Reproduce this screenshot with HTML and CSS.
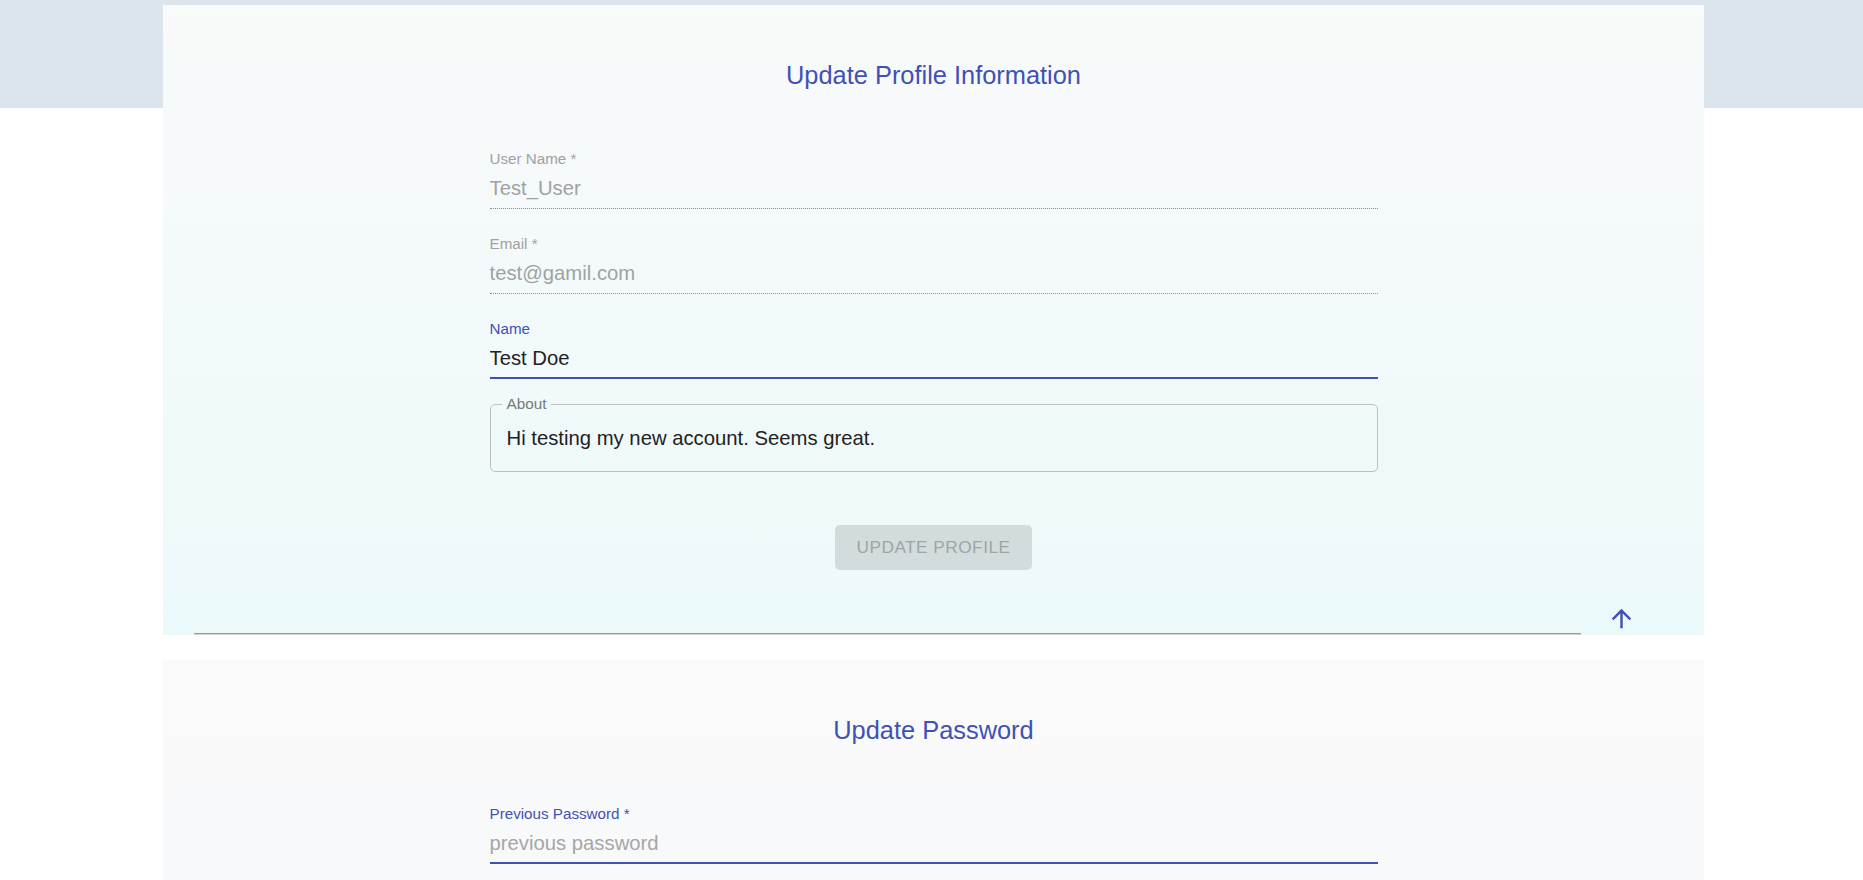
FILE: index.html
```html
<!DOCTYPE html>
<html lang="en">
<head>
<meta charset="utf-8">
<title>Profile</title>
<link rel="stylesheet" href="styles.css">
</head>
<body>
<main class="page">
  <section class="card">
    <h2 class="card-title">Update Profile Information</h2>
    <form class="form">
      <div class="field field-disabled">
        <label class="field-label" for="username">User Name *</label>
        <input class="field-input" id="username" type="text" value="Test_User" disabled>
      </div>
      <div class="field field-disabled">
        <label class="field-label" for="email">Email *</label>
        <input class="field-input" id="email" type="text" value="test@gamil.com" disabled>
      </div>
      <div class="field field-focused">
        <label class="field-label" for="name">Name</label>
        <input class="field-input" id="name" type="text" value="Test Doe">
      </div>
      <fieldset class="outlined">
        <legend class="outlined-label">About</legend>
        <textarea class="outlined-text" rows="1">Hi testing my new account. Seems great.</textarea>
      </fieldset>
      <div class="actions">
        <button class="btn btn-disabled" type="button" disabled>Update Profile</button>
      </div>
    </form>
    <div class="card-footer">
      <div class="divider"></div>
      <button class="icon-btn" type="button" aria-label="Scroll to top">
        <svg viewBox="0 0 24 24" width="29" height="29" aria-hidden="true"><path d="M4 12l1.41 1.41L11 7.83V20h2V7.83l5.58 5.59L20 12l-8-8-8 8z" fill="currentColor"/></svg>
      </button>
    </div>
  </section>

  <section class="card card-second">
    <h2 class="card-title">Update Password</h2>
    <form class="form">
      <div class="field field-focused">
        <label class="field-label" for="prev">Previous Password *</label>
        <input class="field-input" id="prev" type="password" placeholder="previous password">
      </div>
    </form>
  </section>
</main>
</body>
</html>
```

FILE: styles.css
```css
html {
  overflow: hidden;
}

body {
  margin: 0;
  font-family: "Liberation Sans", Arial, sans-serif;
  background: linear-gradient(to bottom, #dce4ec 0, #dce4ec 108px, #ffffff 108px);
  min-height: 100vh;
}

.page {
  display: flex;
  flex-direction: column;
  padding-top: 5px;
}

.card {
  width: 1541px;
  margin-left: 163px;
  padding-top: 55px;
  box-sizing: border-box;
  background: linear-gradient(to bottom, #f9fafa 0%, #ecf9fa 100%);
  display: flex;
  flex-direction: column;
}

.card-second {
  margin-top: 25px;
  background: linear-gradient(to bottom, #fafafa 0, #f7f9fa 100%);
  padding-bottom: 120px;
}

.card-title {
  margin: 0;
  font-size: 25.4px;
  line-height: 30px;
  font-weight: 400;
  color: #3f51b5;
  text-align: center;
}

.form {
  width: 888px;
  margin: 60px auto 0;
  display: flex;
  flex-direction: column;
}

.field {
  display: flex;
  flex-direction: column;
  padding-bottom: 8px;
  border-bottom: 1px solid #8e8e8e;
}

.field + .field {
  margin-top: 26px;
}

.field-label {
  display: block;
  font-size: 15.2px;
  line-height: 18px;
  color: #757878;
}

.field-input {
  margin: 8px 0 0;
  padding: 0;
  border: none;
  outline: none;
  background: transparent;
  font-family: "Liberation Sans", Arial, sans-serif;
  font-size: 20.3px;
  line-height: 24px;
  height: 24px;
  color: #222222;
  width: 100%;
}

.field-input::placeholder {
  color: #a6a6a6;
  opacity: 1;
}

.field-disabled {
  border-bottom: 1px dotted #8f8f8f;
}

.field-disabled .field-label {
  color: #a0a2a2;
}

.field-disabled .field-input {
  color: #a0a2a2;
  -webkit-text-fill-color: #a0a2a2;
}

.field-focused {
  padding-bottom: 7px;
  border-bottom: 2px solid #3f51b5;
}

.field-focused .field-label {
  color: #3f51b5;
}

.outlined {
  margin: 16px 0 0;
  padding: 13px 16px 21px;
  min-width: 0;
  border: 1px solid #bcc0c0;
  border-radius: 5px;
}

.outlined-label {
  padding: 0 5px;
  margin-left: -5px;
  font-size: 15.3px;
  line-height: 18px;
  color: #767979;
}

.outlined-text {
  display: block;
  width: 100%;
  height: 24px;
  margin: 0;
  padding: 0;
  border: none;
  outline: none;
  resize: none;
  overflow: hidden;
  background: transparent;
  font-family: "Liberation Sans", Arial, sans-serif;
  font-size: 20.3px;
  line-height: 24px;
  color: #222222;
}

.actions {
  margin-top: 53px;
  display: flex;
  justify-content: center;
}

.btn {
  width: 197px;
  height: 45px;
  padding: 0;
  border: none;
  border-radius: 5px;
  font-family: "Liberation Sans", Arial, sans-serif;
  font-size: 17.3px;
  letter-spacing: 0.45px;
  text-transform: uppercase;
}

.btn-disabled {
  background: #d3dcdc;
  color: #9ea5a5;
}

.card-footer {
  margin-top: 34px;
  display: flex;
  align-items: flex-end;
  padding-left: 31px;
  padding-right: 68px;
}

.divider {
  flex: 1;
  height: 0;
  border-top: 1px solid #9a9a9a;
  border-bottom: 1px solid #d4d6d6;
}

.icon-btn {
  margin-left: 26px;
  margin-bottom: 2px;
  padding: 0;
  border: none;
  background: transparent;
  color: #3f51b5;
  width: 29px;
  height: 29px;
  display: flex;
}

.icon-btn svg {
  display: block;
}
```
